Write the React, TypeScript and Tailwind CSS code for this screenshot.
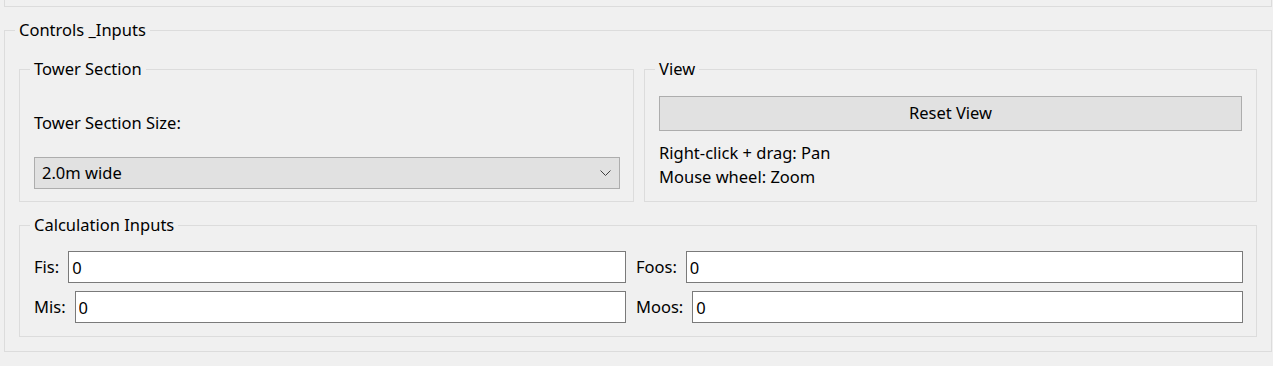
import React from 'react';

const font = { fontFamily: '"Noto Sans", "Open Sans", sans-serif' };

const GroupBox: React.FC<{ title: string; className?: string; children: React.ReactNode }> = ({ title, className = '', children }) => (
  <fieldset className={`border border-[#dcdcdc] min-w-0 ${className}`}>
    <legend className="ml-[10px] px-[4px] leading-[20px] text-black">{title}</legend>
    {children}
  </fieldset>
);

const Field: React.FC<{ label: string; value: string; className?: string }> = ({ label, value, className = '' }) => (
  <div className={`flex items-center gap-[9px] ${className}`}>
    <span className="text-black">{label}</span>
    <input
      defaultValue={value}
      className="flex-1 min-w-0 h-[32px] bg-white border border-[#7a7a7a] px-[3px] text-black outline-none"
    />
  </div>
);

export default function App() {
  return (
    <div className="w-[1273px] h-[366px] bg-[#f0f0f0] overflow-hidden text-[16.5px] text-black" style={font}>
      {/* bottom edge of the panel above */}
      <div className="ml-[4px] mr-[1px] h-[7px] border border-t-0 border-[#dcdcdc]" />

      <GroupBox title="Controls _Inputs" className="ml-[4px] mr-[1px] mt-[13px]">
        <div className="px-[14px] pt-[19px] pb-[14px] flex flex-col gap-[13px]">
          <div className="flex gap-[10px]">
            {/* Tower Section */}
            <GroupBox title="Tower Section" className="w-[615px]">
              <div className="pl-[14px] pr-[13px] pt-[34px] pb-[12px] flex flex-col gap-[24px]">
                <span className="leading-[20px]">Tower Section Size:</span>
                <div className="h-[32px] bg-[#e1e1e1] border border-[#adadad] flex items-center justify-between pl-[7px] pr-[8px]">
                  <span>2.0m wide</span>
                  <svg width="11" height="6" viewBox="0 0 11 6" className="text-[#404040]">
                    <path d="M0.5 0.5 L5.5 5.5 L10.5 0.5" fill="none" stroke="currentColor" strokeWidth="1" />
                  </svg>
                </div>
              </div>
            </GroupBox>

            {/* View */}
            <GroupBox title="View" className="flex-1">
              <div className="px-[14px] pt-[17px] pb-[12px] flex flex-col">
                <button className="h-[35px] bg-[#e1e1e1] border border-[#adadad] text-black">Reset View</button>
                <div className="mt-[10px] leading-[24px]">
                  <div>Right-click + drag: Pan</div>
                  <div>Mouse wheel: Zoom</div>
                </div>
              </div>
            </GroupBox>
          </div>

          {/* Calculation Inputs */}
          <GroupBox title="Calculation Inputs">
            <div className="pl-[14px] pr-[13px] pt-[16px] pb-[13px] flex flex-col gap-[8px]">
              <div className="flex gap-[10px]">
                <Field label="Fis:" value="0" className="w-[592px]" />
                <Field label="Foos:" value="0" className="flex-1" />
              </div>
              <div className="flex gap-[10px]">
                <Field label="Mis:" value="0" className="w-[592px]" />
                <Field label="Moos:" value="0" className="flex-1" />
              </div>
            </div>
          </GroupBox>
        </div>
      </GroupBox>
    </div>
  );
}
